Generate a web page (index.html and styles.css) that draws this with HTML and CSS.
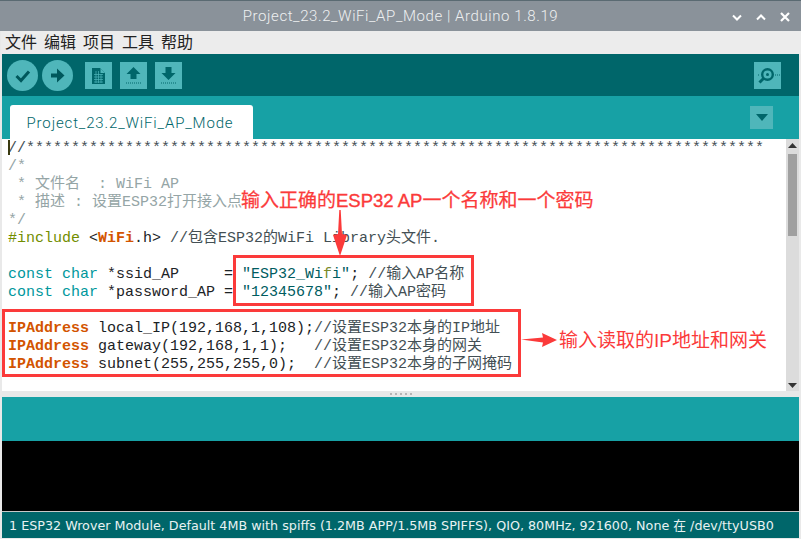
FILE: index.html
```html
<!DOCTYPE html>
<html lang="zh">
<head>
<meta charset="utf-8">
<title>Project_23.2_WiFi_AP_Mode | Arduino 1.8.19</title>
<link rel="stylesheet" href="styles.css">
</head>
<body>
<div class="window">
  <header class="titlebar">
    <span class="title">Project_23.2_WiFi_AP_Mode | Arduino 1.8.19</span>
    <div class="winctrls">
      <svg width="10" height="7" viewBox="0 0 10 7"><path d="M1 1.500l4 4 4-4" fill="none" stroke="#fff" stroke-width="2"/></svg>
      <svg width="10" height="7" viewBox="0 0 10 7"><path d="M1 5.500l4-4 4 4" fill="none" stroke="#fff" stroke-width="2"/></svg>
      <svg width="10" height="10" viewBox="0 0 10 10"><path d="M1 1l8 8M9 1l-8 8" fill="none" stroke="#fff" stroke-width="2.200"/></svg>
    </div>
  </header>
  <nav class="menubar">
    <span>文件</span><span>编辑</span><span>项目</span><span>工具</span><span>帮助</span>
  </nav>
  <div class="toolbar">
    <button class="round"><svg width="31" height="31" viewBox="0 0 31 31"><path d="M9.500 16l4.500 4.500 8-9" fill="none" stroke="#00585c" stroke-width="3"/></svg></button>
    <button class="round"><svg width="31" height="31" viewBox="0 0 31 31"><path d="M9 13.500h6v-5l7.500 7-7.500 7v-5h-6z" fill="#00585c"/></svg></button>
    <button class="square first"><svg width="27" height="27" viewBox="0 0 27 27"><path d="M7 6h8l5 5v11H7z" fill="#00666a"/><path d="M15.500 6.500v4.500h4.500z" fill="#4fb6ba"/><path d="M9 12.500h9M9 15h9M9 17.500h9M9 20h9M11 9v12M13.500 9v12M16 12v9" stroke="#4fb6ba" stroke-width=".7"/></svg></button>
    <button class="square"><svg width="27" height="27" viewBox="0 0 27 27"><path d="M13.500 5l7 7h-4v5h-6v-5h-4z" fill="#00666a"/><path d="M6 21h15" stroke="#00666a" stroke-dasharray="1 1"/></svg></button>
    <button class="square"><svg width="27" height="27" viewBox="0 0 27 27"><path d="M13.500 18l7-7h-4V5h-6v6h-4z" fill="#00666a"/><path d="M6 21h15" stroke="#00666a" stroke-dasharray="1 1"/></svg></button>
    <button class="square monitor"><svg width="27" height="27" viewBox="0 0 27 27"><circle cx="13.500" cy="12.500" r="5.300" fill="none" stroke="#00666a" stroke-width="2.400"/><circle cx="13.500" cy="12.500" r="1.500" fill="#00666a"/><path d="M9.500 16.500l-4 4" stroke="#00666a" stroke-width="3"/><path d="M4 13h2M21 13h5" stroke="#00666a" stroke-dasharray="1 1"/></svg></button>
  </div>
  <div class="tabbar">
    <div class="tab">Project_23.2_WiFi_AP_Mode</div>
    <button class="tabmenu"><svg width="12" height="7" viewBox="0 0 12 7"><path d="M0 0h12L6 7z" fill="#00666a"/></svg></button>
  </div>
  <main class="editor">
    <pre class="code"><i class="caret"></i><span class="line">//**********************************************************************************</span>
<span class="cm">/*</span>
<span class="cm"> * 文件名  : WiFi AP</span>
<span class="cm"> * 描述 : 设置ESP32打开接入点</span>
<span class="cm">*/</span>
<span class="inc">#include</span> &lt;<b>WiFi</b>.h&gt; <span class="line">//包含ESP32的WiFi Library头文件.</span>

<span class="ty">const</span> <span class="ty">char</span> *ssid_AP     = <span class="str">"ESP32_Wi<span class="tip">f</span>i"</span>; <span class="line">//输入AP名称</span>
<span class="ty">const</span> <span class="ty">char</span> *password_AP = <span class="str">"12345678"</span>; <span class="line">//输入AP密码</span>

<b>IPAddress</b> local_IP(192,168,1,108);<span class="line">//设置ESP32本身的IP地址</span>
<b>IPAddress</b> gateway(192,168,1,1);   <span class="line">//设置ESP32本身的网关</span>
<b>IPAddress</b> subnet(255,255,255,0);  <span class="line">//设置ESP32本身的子网掩码</span></pre>
    <div class="scrollbar">
      <svg width="9" height="5" viewBox="0 0 9 5"><path d="M0 5h9L4.500 0z" fill="#333"/></svg>
      <div class="track"><div class="thumb"></div></div>
      <svg width="9" height="5" viewBox="0 0 9 5"><path d="M0 0h9L4.500 5z" fill="#333"/></svg>
    </div>
    <div class="notebox one"></div>
    <div class="notebox two"></div>
    <div class="note top">输入正确的<b>ESP32 AP</b>一个名称和一个密码</div>
    <div class="note side">输入读取的IP地址和网关</div>
    <svg class="arrow down" width="16" height="47" viewBox="0 0 16 47"><path d="M7.300 0h1.400L10 24l5 1-7 21-7-21 5-1z" fill="#fb3a3a"/></svg>
    <svg class="arrow right" width="36" height="14" viewBox="0 0 36 14"><path d="M0 6.500l22-2L21 0l15 7-15 7 1-4.500z" fill="#fb3a3a"/></svg>
  </main>
  <div class="divider"><i></i><i></i><i></i><i></i><i></i></div>
  <div class="msgbar"></div>
  <div class="console"></div>
  <footer class="status">1 ESP32 Wrover Module, Default 4MB with spiffs (1.2MB APP/1.5MB SPIFFS), QIO, 80MHz, 921600, None 在 /dev/ttyUSB0</footer>
</div>
</body>
</html>
```
FILE: styles.css
```css
* { box-sizing: border-box; }
html, body { margin: 0; height: 100%; background: #fff; overflow: hidden; }
.window { width: 801px; height: 539px; display: flex; flex-direction: column; font-family: Roboto, "Noto Sans CJK SC", sans-serif; background: #e9e9e9; }
.titlebar { height: 31px; flex: none; background: #8a929a; border-top: 1px solid #5a6a72; display: flex; align-items: center; justify-content: center; position: relative; }
.title { color: #eef0f1; font-size: 15px; font-weight: 300; letter-spacing: .58px; }
.winctrls { position: absolute; right: 11px; top: 11px; display: flex; gap: 14px; align-items: center; }
.menubar { height: 23px; flex: none; background: #ececec; display: flex; gap: 7px; padding: 0 4px 3px; align-items: center; font-family: "Noto Sans CJK SC", sans-serif; font-size: 16px; color: #222; margin-left: 1px; }
.toolbar { height: 42px; flex: none; margin: 0 2px; background: #00666a; display: flex; align-items: center; padding-left: 5px; gap: 4px; }
.toolbar button { padding: 0; border: 0; background: #4fb6ba; display: block; }
.round { width: 31px; height: 31px; border-radius: 50%; }
.square { width: 27px; height: 27px; margin-left: 4px; }
.square.first { margin-left: 8px; }
.monitor { margin-left: auto; margin-right: 18px; }
.toolbar svg { display: block; }
.tabbar { height: 43px; flex: none; margin: 0 2px; background: #17a1a5; display: flex; align-items: flex-end; padding-left: 8px; position: relative; }
.tab { width: 243px; height: 34px; padding-right: 3px; background: #fff; border-radius: 3px 3px 0 0; color: #00666a; font-size: 15px; font-weight: 300; letter-spacing: .86px; text-align: center; line-height: 36px; }
.tabmenu { position: absolute; right: 26px; top: 10px; width: 23px; height: 23px; padding: 0; border: 0; background: #4fb6ba; display: flex; align-items: center; justify-content: center; }
.editor { height: 252px; flex: none; margin: 0 2px; background: #fff; position: relative; }
.code { margin: 0; padding: 0 0 0 6px; font-family: "Liberation Mono", "Noto Sans CJK SC", monospace; font-size: 15px; line-height: 18px; color: #1c2326; position: relative; border-top: 1px solid transparent; }
.caret { position: absolute; left: 6px; top: 0; width: 2px; height: 15px; background: #3a3a10; }
.line { color: #434f54; }
.cm { color: #95a5a6; }
.inc { color: #728e00; }
.ty { color: #00979c; }
.str { color: #005c5f; }
.tip { color: #7a8a2a; }
.code b { color: #d35400; font-weight: 700; }
.scrollbar { position: absolute; right: 0; top: 0; bottom: 0; width: 13px; background: #dcdcdc; display: flex; flex-direction: column; align-items: center; padding: 4px 0 3px; }
.scrollbar svg { flex: none; }
.track { flex: 1; width: 100%; padding: 6px 2px; }
.thumb { height: 82px; background: #a0a0a0; }
.notebox { position: absolute; border: 3px solid #fb3a3a; }
.notebox.one { left: 231px; top: 116px; width: 241px; height: 51px; }
.notebox.two { left: 0; top: 170px; width: 519px; height: 68px; }
.note { position: absolute; color: #fb3a3a; font-family: "Liberation Sans", "Noto Sans CJK SC", sans-serif; font-size: 19px; line-height: 24px; white-space: nowrap; }
.note b { font-size: 18.500px; font-weight: 400; -webkit-text-stroke: .4px #fb3a3a; }
.note.top { left: 239px; top: 50px; -webkit-text-stroke: .25px #fb3a3a; }
.note.side { left: 557px; top: 190px; }
.arrow { position: absolute; }
.arrow.down { left: 330px; top: 71px; }
.arrow.right { left: 519px; top: 194px; }
.divider { height: 6px; flex: none; margin: 0 2px; background: #e8e8e8; display: flex; justify-content: center; align-items: center; gap: 3px; }
.divider i { width: 2px; height: 2px; background: #b5b5b5; }
.msgbar { height: 44px; flex: none; margin: 0 2px; background: #17a1a5; }
.console { height: 70px; flex: none; margin: 0 2px; background: #000; }
.status { height: 27px; flex: none; margin: 0 2px; background: #00666a; color: #e8f2f2; border-top: 1px solid #c8c8c8; font-family: "DejaVu Sans", "Noto Sans CJK SC", sans-serif; font-size: 12.720px; line-height: 28px; padding-left: 7px; white-space: nowrap; }
```
